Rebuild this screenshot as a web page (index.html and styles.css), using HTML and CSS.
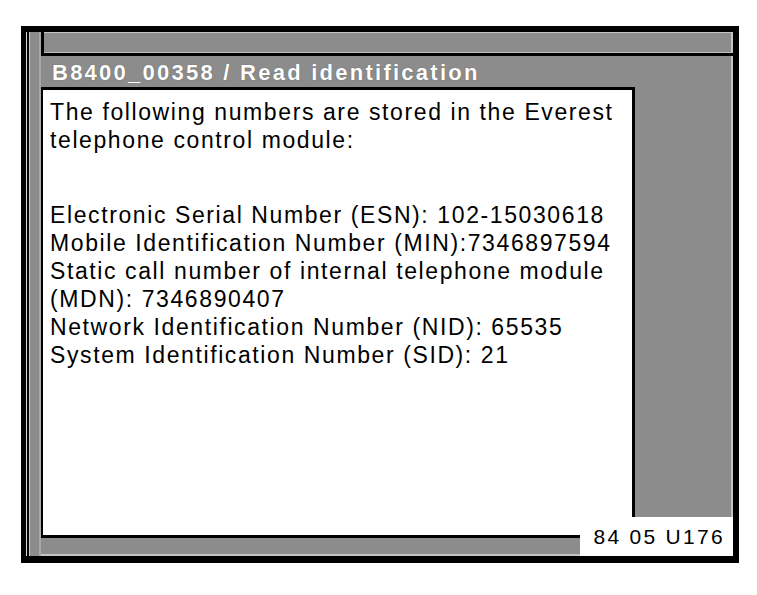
FILE: index.html
```html
<!DOCTYPE html>
<html>
<head>
<meta charset="utf-8">
<link rel="stylesheet" href="styles.css">
</head>
<body>
<div class="frame">
  <div class="rail"></div>
  <div class="main">
    <div class="topbar"></div>
    <div class="titlebar">B8400_00358 / Read identification</div>
    <div class="middle">
      <div class="content">
        <p class="para">The following numbers are stored in the Everest<br>telephone control module:</p>
        <p class="para data">Electronic Serial Number (ESN): 102-15030618<br>Mobile Identification Number (MIN):7346897594<br>Static call number of internal telephone module<br>(MDN): 7346890407<br>Network Identification Number (NID): 65535<br>System Identification Number (SID): 21</p>
      </div>
      <div class="side"></div>
    </div>
    <div class="bottom"></div>
  </div>
  <div class="stamp">84 05 U176</div>
</div>
</body>
</html>
```
FILE: styles.css
```css
html, body {
  margin: 0;
  padding: 0;
  background: #ffffff;
}
body {
  width: 757px;
  height: 595px;
  overflow: hidden;
  font-family: "Liberation Sans", Arial, sans-serif;
}
.frame {
  position: relative;
  box-sizing: border-box;
  margin: 26px 0 0 21px;
  width: 718px;
  height: 537px;
  border-style: solid;
  border-color: #000;
  border-width: 6px 6px 7px 5px;
  background: #8c8c8c;
  display: grid;
  grid-template-columns: 15px 1fr;
}
.rail {
  background: linear-gradient(to right, #d6d6d6 0 1px, #000 1px 3px, #c8c8c8 3px 4px, #8c8c8c 4px 13px, #a8a8a8 13px 15px);
}
.main {
  display: flex;
  flex-direction: column;
  min-width: 0;
}
.topbar {
  box-sizing: border-box;
  height: 24px;
  border-left: 3px solid #000;
  border-bottom: 3px solid #000;
  background: #8c8c8c;
  box-shadow: inset 0 1px 0 #c4c4c4, inset -2px 0 0 #c4c4c4, inset 0 -1px 0 #bdbdbd;
}
.titlebar {
  height: 31px;
  box-sizing: border-box;
  padding: 6px 0 0 11px;
  color: #fff;
  font-weight: bold;
  font-size: 22px;
  line-height: 22px;
  letter-spacing: 2.25px;
  white-space: nowrap;
  box-shadow: inset -2px 0 0 #c4c4c4;
  text-shadow: 0 0 1px #555;
}
.middle {
  flex: 1;
  display: grid;
  grid-template-columns: 594px 1fr;
}
.content {
  box-sizing: border-box;
  background: #fff;
  border: 3px solid #000;
  border-width: 3px 3px 3px 2px;
  padding: 8px 0 0 7px;
  color: #000;
  font-size: 23px;
  line-height: 28px;
  letter-spacing: 1.6px;
  white-space: nowrap;
}
.para {
  margin: 0;
}
.data {
  margin-top: 47px;
}
.side {
  box-shadow: inset -2px 0 0 #c4c4c4;
}
.bottom {
  height: 18px;
  box-shadow: inset 0 -2px 0 #c4c4c4;
}
.stamp {
  position: absolute;
  right: 0;
  bottom: 0;
  width: 153px;
  height: 39px;
  box-sizing: border-box;
  background: #fff;
  color: #000;
  font-size: 21px;
  line-height: 39px;
  text-align: right;
  padding-right: 8px;
  letter-spacing: 2.3px;
}
```
